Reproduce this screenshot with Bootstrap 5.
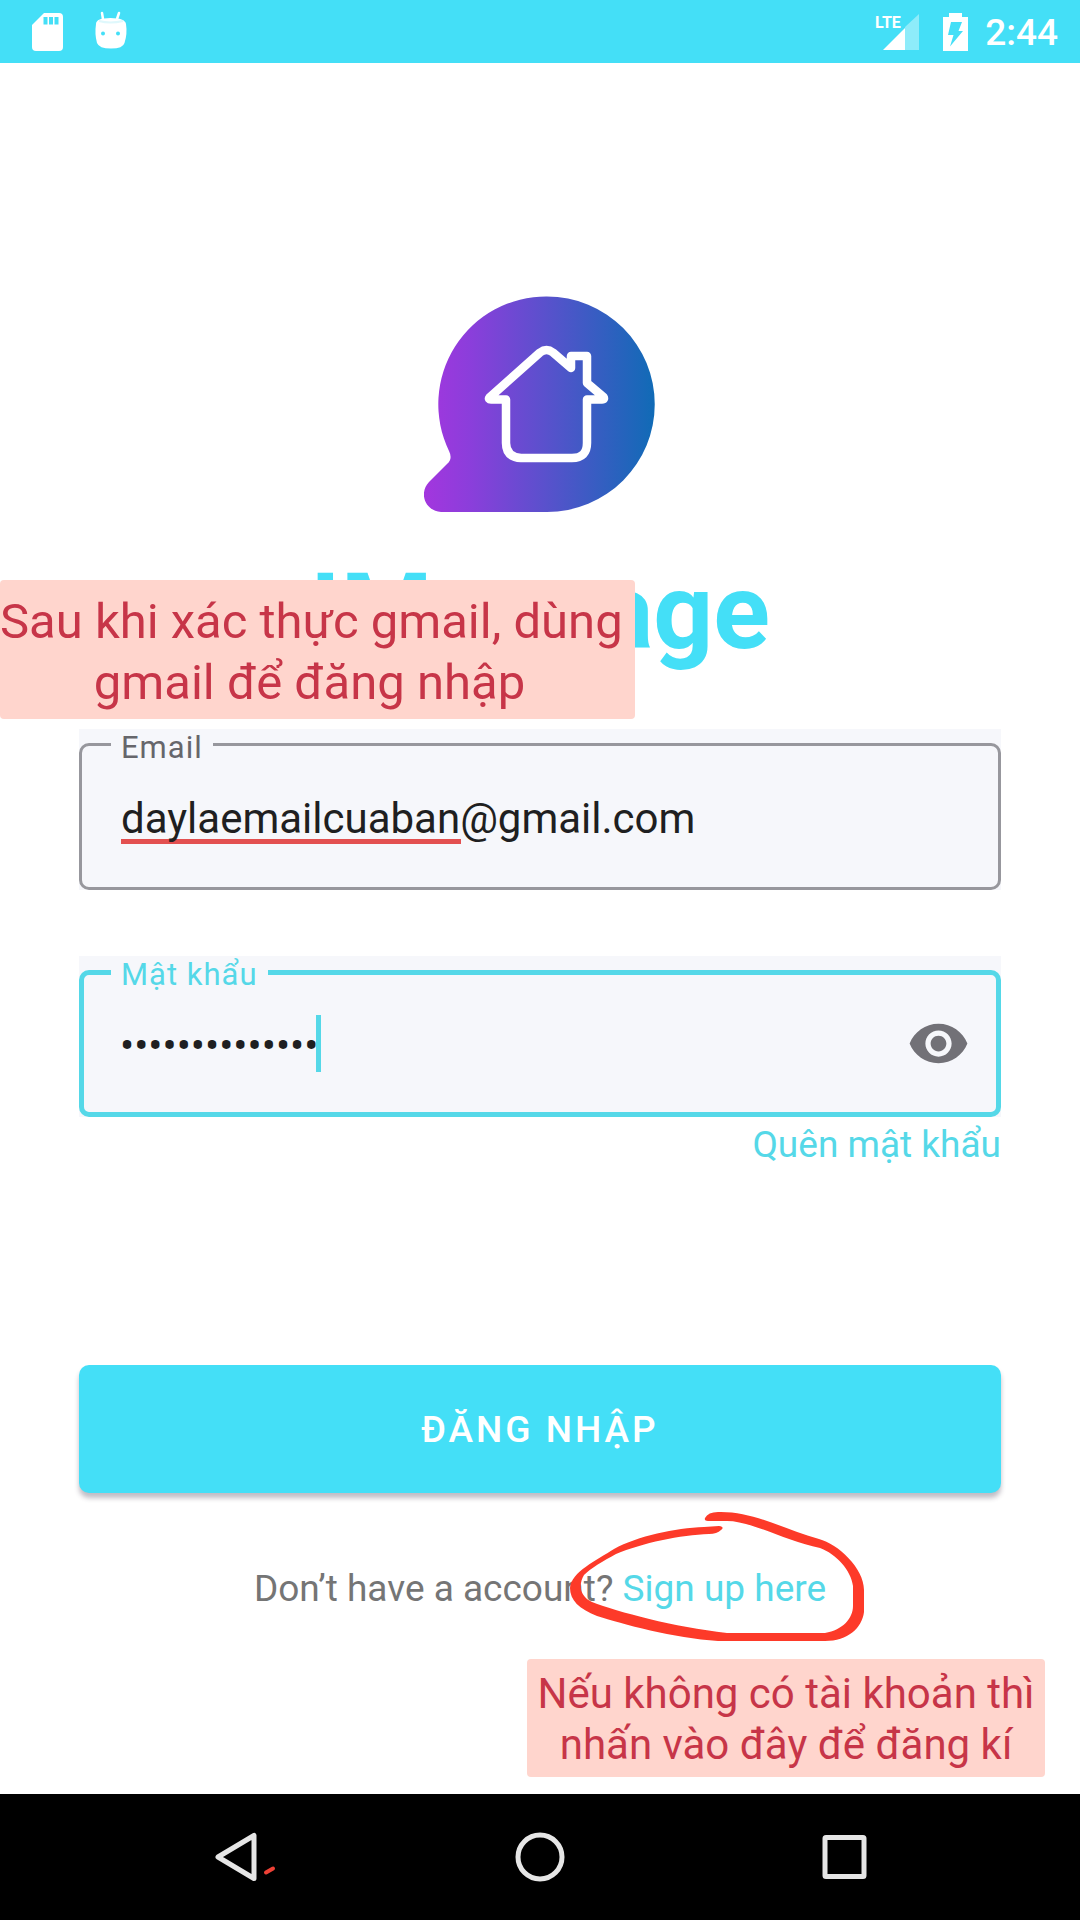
<!DOCTYPE html>
<html lang="vi">
<head>
<meta charset="utf-8">
<meta name="viewport" content="width=device-width, initial-scale=1">
<title>IMessage – Đăng nhập</title>
<link href="https://cdn.jsdelivr.net/npm/bootstrap@5.3.0/dist/css/bootstrap.min.css" rel="stylesheet">
<style>
  :root { --sky: #44dff7; --sky-soft: #55d8e8; --field: #f6f7fb; }
  body { font-family: Roboto, "Noto Sans", sans-serif; background: #fff; }
  svg { display: block; flex: none; }
  .status-bar { background: var(--sky); height: 63px; padding: 0 22px 0 32px; color: #fff; }
  .clock { font-size: 37px; line-height: 44px; font-weight: 500; padding-top: 2px; }
  .login { padding: 233px 79px 0; }
  .brand { color: var(--sky); font-size: 105px; line-height: 124px; font-weight: 700; margin: 39px 0 54px; }
  .field { background: var(--field); padding-top: 14px; margin-bottom: 66px; }
  .field label { top: 0; left: 32px; padding: 1px 10px 0; background: var(--field); color: #66666b; font-size: 31px; line-height: 36px; letter-spacing: 1px; }
  .field .form-control { height: 147px; border: 3px solid #97979d; border-radius: 10px; padding: 4px 40px 0 39px; background-color: transparent; color: #1f1f21; font-size: 42px; line-height: 50px; box-shadow: none; }
  .field .form-control.misspelt { background: linear-gradient(#e35050, #e35050) 39px 93px / 340px 5px no-repeat; }
  .field.active { margin-bottom: 6px; }
  .field.active label { color: var(--sky-soft); }
  .field.active .form-control { border: 5px solid var(--sky-soft); padding: 4px 120px 0 36px; }
  .caret { left: 237px; top: 59px; width: 5px; height: 57px; background: var(--sky-soft); }
  .eye { right: 31px; top: 56px; }
  .small-line { font-size: 37px; line-height: 44px; }
  .small-line a, a.small-line { color: var(--sky-soft); text-decoration: none; }
  .prompt { color: #757575; }
  .btn-login, .btn-login:hover { background: var(--sky); color: #fff; height: 128px; border: 0; border-radius: 10px; margin: 198px 0 74px; padding: 8px 12px 6px; font-size: 37px; font-weight: 500; letter-spacing: 3px; box-shadow: 0 5px 5px rgba(60, 50, 75, .32); }
  .note { background: #ffd5cd; color: #c73548; text-align: center; white-space: nowrap; border-radius: 4px; }
  .note-top { left: 0; top: 517px; width: 635px; height: 139px; font-size: 49px; line-height: 61px; padding: 11px 16px 0 0; }
  .note-bottom { right: 35px; top: 1596px; width: 518px; height: 118px; font-size: 42px; line-height: 51px; padding-top: 9px; }
  .scribble { left: 560px; top: 1437px; }
  .nav-bar { height: 126px; background: #000; padding: 0 205px; }
  .nav-bar button { background: none; border: 0; padding: 0; }
  .tick { left: 100%; top: 35px; }
</style>
</head>
<body>
<div class="d-flex flex-column min-vh-100">
  <header class="status-bar d-flex align-items-center justify-content-between">
    <div class="d-flex align-items-center">
      <svg width="31" height="38" viewBox="0 0 31 38" aria-label="SD"><path fill="#fff" d="M12 0H27Q31 0 31 4V34Q31 38 27 38H4Q0 38 0 34V12Z"/><path fill="var(--sky)" d="M11.500 4h4v7.500h-4zM17 4h4v7.500h-4zM22.500 4h4v7.500h-4z"/></svg>
      <svg class="ms-4" width="46" height="42" viewBox="-1 0 46 42" aria-label="Android"><path d="M15 8 14 2M29 8 31 2" stroke="#fff" stroke-width="2.500" stroke-linecap="round"/><path fill="#fff" d="M8 13Q8 7 22.500 7T38 13Q39.500 23 36.500 32Q35 37.500 23 37.500T9 32Q6.500 23 8 13Z"/><path d="M11 10Q22 13 35 10" fill="none" stroke="#dff8fc" stroke-width="2"/><circle cx="15" cy="22.500" r="2" fill="var(--sky)"/><circle cx="30" cy="22.500" r="2" fill="var(--sky)"/></svg>
    </div>
    <div class="d-flex align-items-center">
      <svg width="46" height="38" viewBox="1 0 46 38" aria-label="LTE"><path fill="#fff" fill-opacity=".4" d="M32 14 46 1V37H32Z"/><path fill="#fff" d="M10 37 32 15V37Z"/><text x="2" y="15" fill="#fff" font-size="16" font-weight="700">LTE</text></svg>
      <svg class="ms-3" width="45" height="38" viewBox="-7 0 45 38" aria-label="Pin"><path fill="#fff" d="M0 4H6V0H19V4H25V38H0Z"/><path fill="var(--sky)" d="M8 9H19L15.500 18H20L7 33.500 10.500 22H5Z"/></svg>
      <span class="clock ms-1">2:44</span>
    </div>
  </header>

  <main class="login flex-grow-1 position-relative">
    <svg class="mx-auto" width="232" height="216" viewBox="424 296 232 216" role="img" aria-label="IMessage">
      <defs><linearGradient id="brandFill" gradientUnits="userSpaceOnUse" x1="424" y1="404" x2="655" y2="404"><stop offset="0" stop-color="#a336de"/><stop offset=".2" stop-color="#8b3edb"/><stop offset=".6" stop-color="#4e55c9"/><stop offset="1" stop-color="#106bb6"/></linearGradient></defs>
      <path fill="url(#brandFill)" d="M547 296.500A107.700 107.700 0 0 1 547 512H441C426 511 418 494 429 482L447 464Q453 459 449 451A107.700 107.700 0 0 1 547 296.500Z"/>
      <path fill="none" stroke="#fff" stroke-width="8.500" stroke-linejoin="round" d="M489.500 397.500 540 352.500Q546.500 347.500 553 352.500L571 368V356H587V383L603.500 397Q605 399.500 602 399.500H587V443Q587 458 572 458H521Q506 457 506 443V399.500H491Q488 399.500 489.500 397.500Z"/>
    </svg>
    <h1 class="brand text-center">IMessage</h1>

    <form>
      <div class="field position-relative">
        <label class="position-absolute" for="email">Email</label>
        <input class="form-control misspelt" id="email" type="email" value="daylaemailcuaban@gmail.com" spellcheck="false">
      </div>
      <div class="field active position-relative">
        <label class="position-absolute" for="password">Mật khẩu</label>
        <input class="form-control" id="password" type="password" value="matkhaucuaban1">
        <span class="caret position-absolute"></span>
        <button class="eye btn p-0 border-0 position-absolute" type="button" aria-label="Hiện mật khẩu">
          <svg width="63" height="63" viewBox="0 0 24 24"><path fill="#727177" d="M12 4.500C7 4.500 2.730 7.610 1 12c1.730 4.390 6 7.500 11 7.500s9.270-3.110 11-7.500c-1.730-4.390-6-7.500-11-7.500zM12 17c-2.760 0-5-2.240-5-5s2.240-5 5-5 5 2.240 5 5-2.240 5-5 5zm0-8c-1.660 0-3 1.340-3 3s1.340 3 3 3 3-1.340 3-3-1.340-3-3-3z"/></svg>
        </button>
      </div>
      <a class="small-line d-block text-end" href="#forgot">Quên mật khẩu</a>
      <button class="btn btn-login w-100" type="submit">ĐĂNG NHẬP</button>
      <p class="small-line prompt text-center mb-0">Don’t have a account? <a href="#signup">Sign up here</a></p>
    </form>

    <div class="note note-top position-absolute">Sau khi xác thực gmail, dùng<br>gmail để đăng nhập</div>
    <div class="note note-bottom position-absolute">Nếu không có tài khoản thì<br>nhấn vào đây để đăng kí</div>
    <svg class="scribble position-absolute" width="320" height="150" viewBox="560 1500 320 150" aria-hidden="true">
      <path fill="#fd3a29" d="M705 1518Q708 1512 718 1512C752 1511 781 1528 819 1539C838 1544 864 1568 864 1590V1612C862 1628 848 1641 825 1641H718C674 1638 622 1624 597 1616C579 1609 570 1600 570 1588C571 1572 597 1560 614 1549C638 1536 675 1528 704 1527L719 1526Q725 1527 721 1530Q717 1534 709 1534C681 1535 642 1543 616 1554C603 1561 591 1568 584 1575C578 1585 580 1596 592 1602C618 1612 674 1627 727 1633H825C843 1630 853 1618 853 1606V1586C851 1570 836 1554 820 1548C787 1542 752 1521 727 1521H708Q704 1521 705 1518Z"/>
    </svg>
  </main>

  <nav class="nav-bar d-flex align-items-center justify-content-between">
    <button class="position-relative" type="button" aria-label="Quay lại">
      <svg width="54" height="54" viewBox="0 0 54 54"><path d="M49 5.500V48.500L13 27Z" fill="none" stroke="#e6e6e6" stroke-width="5" stroke-linejoin="round"/></svg>
      <svg class="tick position-absolute" width="18" height="12" viewBox="0 0 18 12"><path d="M7 7.500 14 3.500" stroke="#ee4136" stroke-width="4" stroke-linecap="round"/></svg>
    </button>
    <button type="button" aria-label="Trang chủ"><svg width="54" height="54" viewBox="0 0 54 54"><circle cx="27" cy="27" r="22" fill="none" stroke="#e6e6e6" stroke-width="5"/></svg></button>
    <button type="button" aria-label="Gần đây"><svg width="54" height="54" viewBox="0 0 54 54"><rect x="4" y="7.500" width="39" height="39" rx="1" fill="none" stroke="#e6e6e6" stroke-width="5" stroke-linejoin="round"/></svg></button>
  </nav>
</div>
<script src="https://cdn.jsdelivr.net/npm/bootstrap@5.3.0/dist/js/bootstrap.bundle.min.js"></script>
</body>
</html>
